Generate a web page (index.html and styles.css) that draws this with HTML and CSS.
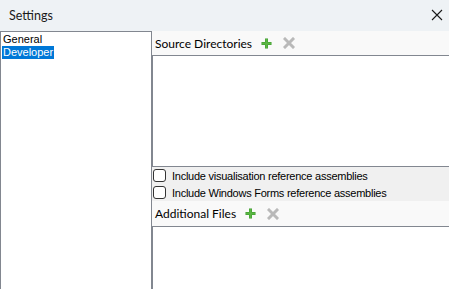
FILE: index.html
```html
<!DOCTYPE html>
<html lang="en">
<head>
    <meta charset="UTF-8">
    <title>Settings</title>
    <link rel="stylesheet" href="styles.css">
</head>
<body>
    <div class="window">
        <!-- Title bar -->
        <div class="titlebar">
            <span class="title">Settings</span>
            <svg class="close" width="12" height="12" viewBox="0 0 12 12">
                <path d="M1 1 L11 11 M11 1 L1 11" stroke="#1a1a1a" stroke-width="1.1" fill="none"/>
            </svg>
        </div>

        <div class="main">
            <!-- Pages list -->
            <div class="nav">
                <div class="nav-item">General</div>
                <div class="nav-item"><span class="selected">Developer</span></div>
            </div>

            <!-- Page content -->
            <div class="content">
                <div class="section-head">
                    <span>Source Directories</span>
                    <svg class="icon-add" width="11" height="11" viewBox="0 0 11 11">
                        <path d="M4 0.5 H7 V4 H10.5 V7 H7 V10.5 H4 V7 H0.5 V4 H4 Z" fill="#3b9a2b"/>
                        <path d="M4.5 1 H6.5 V4.5 H10 V6.5 H6.5 V10 H4.5 V6.5 H1 V4.5 H4.5 Z" fill="#5bb544"/>
                    </svg>
                    <svg class="icon-del" width="12" height="12" viewBox="0 0 12 12">
                        <path d="M2 2 L10 10 M10 2 L2 10" stroke="#b9b9b9" stroke-width="3" stroke-linecap="square" fill="none"/>
                    </svg>
                </div>
                <div class="list list-source"></div>

                <div class="checks">
                    <label class="check"><span class="box"></span>Include visualisation reference assemblies</label>
                    <label class="check"><span class="box"></span>Include Windows Forms reference assemblies</label>
                </div>

                <div class="section-head section-files">
                    <span>Additional Files</span>
                    <svg class="icon-add" width="11" height="11" viewBox="0 0 11 11">
                        <path d="M4 0.5 H7 V4 H10.5 V7 H7 V10.5 H4 V7 H0.5 V4 H4 Z" fill="#3b9a2b"/>
                        <path d="M4.5 1 H6.5 V4.5 H10 V6.5 H6.5 V10 H4.5 V6.5 H1 V4.5 H4.5 Z" fill="#5bb544"/>
                    </svg>
                    <svg class="icon-del" width="12" height="12" viewBox="0 0 12 12">
                        <path d="M2 2 L10 10 M10 2 L2 10" stroke="#b9b9b9" stroke-width="3" stroke-linecap="square" fill="none"/>
                    </svg>
                </div>
                <div class="list list-files"></div>
            </div>
        </div>
    </div>
</body>
</html>
```

FILE: styles.css
```css
/* Page */
body {
    margin: 0;
    font-family: Lato, "Noto Sans", Arial, sans-serif;
    font-size: 12px;
    color: #000;
    background: #f0f0f0;
}

.window {
    width: 449px;
    height: 289px;
    display: flex;
    flex-direction: column;
    overflow: hidden;
}

/* Title bar */
.titlebar {
    height: 31px;
    flex: none;
    display: flex;
    align-items: center;
    justify-content: space-between;
    padding: 0 6px 0 9px;
    background: #eef2f5;
}

.title {
    font-size: 12.5px;
    color: #1a1a1a;
}

.close {
    margin-top: -2px;
}

/* Main area */
.main {
    flex: 1;
    display: flex;
    min-height: 0;
}

/* Left list (WinForms default font) */
.nav {
    width: 152px;
    flex: none;
    box-sizing: border-box;
    border: 1px solid #828790;
    border-bottom: none;
    background: #fff;
    padding: 1px 0 0 1px;
    font-family: "Liberation Sans", Arial, sans-serif;
    font-size: 11px;
}

.nav-item {
    height: 13px;
    line-height: 13px;
    padding-left: 1px;
}

.selected {
    display: inline-block;
    background: #0078d7;
    color: #fff;
    padding: 0 1px;
    margin-left: -1px;
}

/* Right side */
.content {
    flex: 1;
    display: flex;
    flex-direction: column;
}

.section-head {
    height: 24px;
    flex: none;
    display: flex;
    align-items: center;
    padding-left: 3px;
    background: #f9f9f9;
}

.section-files {
    height: 25px;
}

.icon-add {
    margin-left: 9px;
}

.icon-del {
    margin-left: 11px;
}

.list {
    box-sizing: border-box;
    background: #fff;
    border-top: 1px solid #828790;
    border-left: 1px solid #828790;
}

.list-source {
    height: 112px;
    border-bottom: 1px solid #828790;
}

.list-files {
    flex: 1;
}

/* Checkboxes */
.checks {
    font-family: "Liberation Sans", Arial, sans-serif;
    font-size: 11px;
    letter-spacing: -0.25px;
}

.check {
    height: 17px;
    display: flex;
    align-items: center;
    padding-left: 1px;
}

.box {
    width: 11px;
    height: 11px;
    border: 1px solid #333;
    border-radius: 3px;
    background: #fff;
    margin-right: 6px;
}
```
